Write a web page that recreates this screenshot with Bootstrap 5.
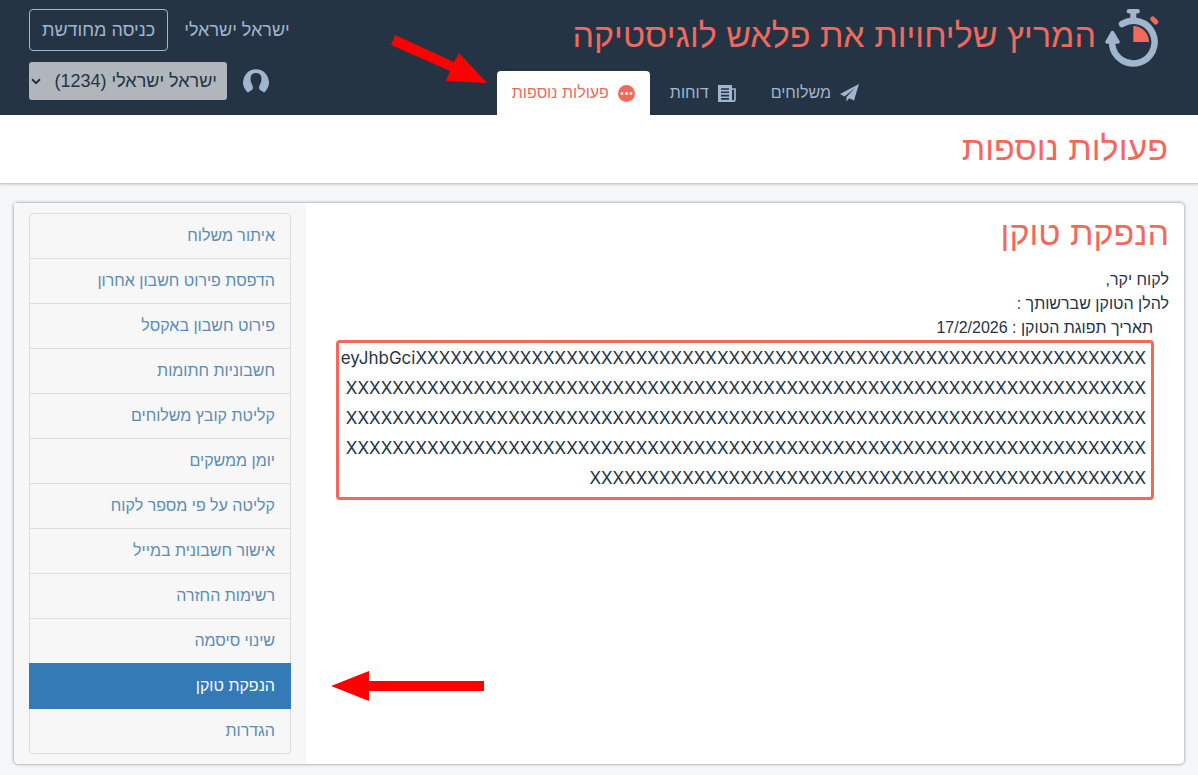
<!DOCTYPE html>
<html lang="he" dir="rtl">
<head>
<meta charset="utf-8">
<meta name="viewport" content="width=device-width, initial-scale=1">
<title>פעולות נוספות</title>
<link href="https://cdn.jsdelivr.net/npm/bootstrap@5.3.0/dist/css/bootstrap.min.css" rel="stylesheet">
<style>
:root{--navy:#243444;--steel:#a1b5cd;--coral:#f2695c}
body{font-family:"Liberation Sans","Open Sans",sans-serif;font-size:16px;line-height:24px;color:#243444;background:#f4f6f8}
.site-head{background:var(--navy);min-height:115px}
.brand-title{font-size:34px;line-height:40px;color:var(--coral);padding-top:6px}
.brand-row{padding:9px 38px 0 0;height:71px}
.brand-row svg{margin-inline-end:8px}
.site-tabs{margin-right:324px;gap:5px}
.site-tabs .nav-link{color:var(--steel);height:44px;padding:0 15px;gap:9px;border-radius:4px 4px 0 0}
.site-tabs .nav-link.active{color:var(--coral);background:#fff}
.user-area{padding:9px 0 0 29px;gap:11px;color:var(--steel)}
.user-name{font-size:18px}
.renew-btn{font-size:18px;line-height:24px;height:42px;padding:6px 12px;color:var(--steel);border:1px solid var(--steel);border-radius:4px}
.account-select{width:198px;height:38px;font-size:18px;line-height:24px;padding:5px 10px 5px 18px;border:0;border-radius:3px;color:var(--navy);background-color:#b1b6bd;background-image:url("data:image/svg+xml,%3Csvg xmlns='http://www.w3.org/2000/svg' viewBox='0 0 10 7'%3E%3Cpath d='M1 1.2l4 4 4-4' fill='none' stroke='%23243444' stroke-width='2'/%3E%3C/svg%3E");background-position:left 2px center;background-size:10px 7px}
.page-band{background:#fff;padding:13px 30px 15px;border-bottom:1px solid #c8cacb;box-shadow:0 1px 2px #0002}
.coral-heading{font-size:34px;line-height:40px;font-weight:400;color:var(--coral)}
.main-panel{margin:18px 13px 10px;background:#fff;border:1px solid #c6cacc;border-radius:5px;box-shadow:0 0 3px #0003}
.side-col{width:292px;flex:none;background:#f7f7f7;padding:10px 15px;border-radius:0 0 0 5px}
.side-menu{--bs-list-group-bg:transparent;--bs-list-group-border-color:#ddd;--bs-list-group-border-radius:4px}
.side-menu .list-group-item{line-height:24px;padding:10px 15px;color:#5b8bb8}
.side-menu .list-group-item.active{color:#fff;background:#337ab7;border-color:#337ab7}
.token-pane{padding:10px 15px}
.token-pane .coral-heading{margin-bottom:15px}
.token-box{margin:0 15px;border:3px solid var(--coral);border-radius:4px;padding:0 5px 4px 0;font-family:Inter,"Open Sans",sans-serif;font-size:17px;line-height:30px;word-break:break-all}
.pointer-tab{left:-106px;top:-36px}
.pointer-item{left:301px;top:7px}
</style>
</head>
<body>
<header class="site-head d-flex">
  <div class="flex-grow-1">
    <div class="brand-row d-flex align-items-start">
      <svg width="56" height="58" viewBox="0 1 56 58" aria-hidden="true">
        <path d="M18 16A21.300 21.300 0 1 1 8.200 37" fill="none" stroke="#a1b5cd" stroke-width="6.500" stroke-linecap="round"/>
        <path d="M29.300 4v11" stroke="#a1b5cd" stroke-width="6"/>
        <path d="M25 3.300h8.600" stroke="#a1b5cd" stroke-width="4.600" stroke-linecap="round"/>
        <path d="M8.400 24.500L3 34h11z" fill="#a1b5cd" stroke="#a1b5cd" stroke-width="3.500" stroke-linejoin="round"/>
        <path d="M29.300 18v16H45A15.700 16 0 0 0 29.300 18z" fill="#f2695c"/>
        <path d="M48.800 11l3 3" stroke="#f2695c" stroke-width="5" stroke-linecap="round"/>
      </svg>
      <div class="brand-title">המריץ שליחויות את פלאש לוגיסטיקה</div>
    </div>
    <nav class="nav site-tabs flex-nowrap">
      <a class="nav-link d-flex align-items-center" href="#">
        <svg width="19" height="18" viewBox="0 0 19 18" aria-hidden="true"><path d="M19 0L0 10l4.500 2.500L15 4 6.500 13v4.500l2.800-3.200 4.700 2.200z" fill="#a1b5cd"/></svg>משלוחים</a>
      <a class="nav-link d-flex align-items-center" href="#">
        <svg width="18" height="17" viewBox="0 0 18 17" aria-hidden="true"><path d="M0 0h14v17H0z" fill="#a1b5cd"/><path d="M3 4h8M3 7.300h8M3 10.600h8M3 13.900h8" stroke="#243444" stroke-width="1.600"/><path d="M14 4h3v11l-1 1.200h-3" fill="none" stroke="#a1b5cd" stroke-width="1.700"/></svg>דוחות</a>
      <a class="nav-link active d-flex align-items-center position-relative" href="#" aria-current="page">
        <svg width="17" height="17" viewBox="0 0 17 17" aria-hidden="true"><circle cx="8.500" cy="8.500" r="8.500" fill="#f2695c"/><g fill="#fff"><circle cx="4" cy="8.500" r="1.400"/><circle cx="8.500" cy="8.500" r="1.400"/><circle cx="13" cy="8.500" r="1.400"/></g></svg>פעולות נוספות
        <svg class="position-absolute pointer-tab" width="96" height="48" viewBox="0 0 96 48" aria-hidden="true"><path d="M4 0L63 27l5-9 28 30-41-2 4-10L0 10z" fill="red"/></svg></a>
    </nav>
  </div>
  <div class="user-area d-flex flex-column">
    <div class="d-flex align-items-center justify-content-end gap-3">
      <span class="user-name">ישראל ישראלי</span>
      <button type="button" class="btn renew-btn">כניסה מחודשת</button>
    </div>
    <div class="d-flex align-items-center justify-content-end gap-3">
      <svg width="26" height="24" viewBox="0 0 26 24" aria-hidden="true"><path d="M5 23.500A13 13 0 1 1 21 23.500L16.500 20.500Q15.500 18 17 15.500Q19 12 18.300 8Q17.500 4 13 4Q8.500 4 7.700 8Q7 12 9 15.500Q10.500 18 9.500 20.500z" fill="#a1b5cd"/></svg>
      <select class="form-select account-select" aria-label="חשבון"><option>ישראל ישראלי (1234)</option></select>
    </div>
  </div>
</header>
<div class="page-band"><h1 class="coral-heading m-0">פעולות נוספות</h1></div>
<main class="main-panel d-flex">
  <section class="token-pane flex-grow-1">
    <h2 class="coral-heading">הנפקת טוקן</h2>
    <div>לקוח יקר,</div>
    <div>להלן הטוקן שברשותך :</div>
    <div class="px-3">תאריך תפוגת הטוקן : 17/2/2026</div>
    <div class="token-box">eyJhbGciXXXXXXXXXXXXXXXXXXXXXXXXXXXXXXXXXXXXXXXXXXXXXXXXXXXXXXXXXXXXXXX<wbr>XXXXXXXXXXXXXXXXXXXXXXXXXXXXXXXXXXXXXXXXXXXXXXXXXXXXXXXXXXXXXXXXXXXXX<wbr>XXXXXXXXXXXXXXXXXXXXXXXXXXXXXXXXXXXXXXXXXXXXXXXXXXXXXXXXXXXXXXXXXXXXX<wbr>XXXXXXXXXXXXXXXXXXXXXXXXXXXXXXXXXXXXXXXXXXXXXXXXXXXXXXXXXXXXXXXXXXXXX<wbr>XXXXXXXXXXXXXXXXXXXXXXXXXXXXXXXXXXXXXXXXXXXXXXXX</div>
  </section>
  <aside class="side-col">
    <div class="list-group side-menu p-0">
      <a class="list-group-item" href="#">איתור משלוח</a>
      <a class="list-group-item" href="#">הדפסת פירוט חשבון אחרון</a>
      <a class="list-group-item" href="#">פירוט חשבון באקסל</a>
      <a class="list-group-item" href="#">חשבוניות חתומות</a>
      <a class="list-group-item" href="#">קליטת קובץ משלוחים</a>
      <a class="list-group-item" href="#">יומן ממשקים</a>
      <a class="list-group-item" href="#">קליטה על פי מספר לקוח</a>
      <a class="list-group-item" href="#">אישור חשבונית במייל</a>
      <a class="list-group-item" href="#">רשימות החזרה</a>
      <a class="list-group-item" href="#">שינוי סיסמה</a>
      <a class="list-group-item active" href="#" aria-current="true">הנפקת טוקן
        <svg class="position-absolute pointer-item" width="153" height="30" viewBox="0 0 153 30" aria-hidden="true"><path d="M0 15L38 0v10h115v10H38v10z" fill="red"/></svg></a>
      <a class="list-group-item" href="#">הגדרות</a>
    </div>
  </aside>
</main>
<script src="https://cdn.jsdelivr.net/npm/bootstrap@5.3.0/dist/js/bootstrap.bundle.min.js"></script>
</body>
</html>
